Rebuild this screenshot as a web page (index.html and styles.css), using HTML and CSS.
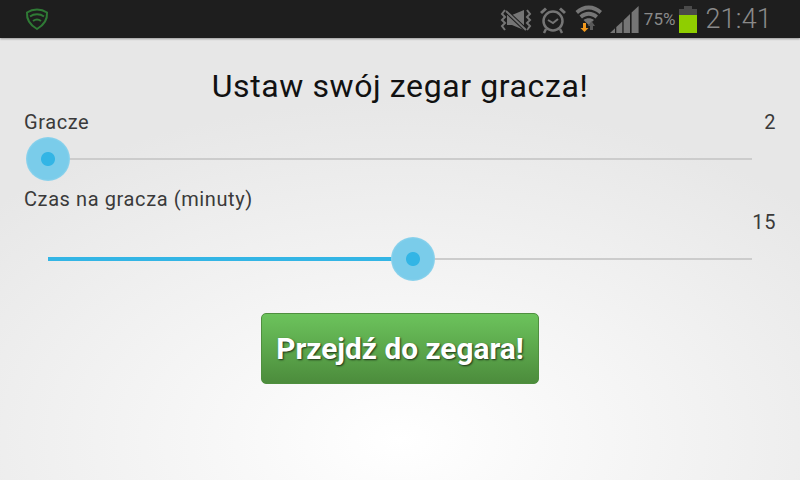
FILE: index.html
```html
<!DOCTYPE html>
<html lang="pl">
<head>
    <meta charset="UTF-8">
    <meta name="viewport" content="width=device-width, initial-scale=1.0">
    <title>Zegar gracza</title>
    <link rel="stylesheet" href="styles.css">
</head>
<body>
    <div class="status-bar">
        <svg class="shield" width="24" height="24" viewBox="0 0 24 24" fill="none" stroke="#2f7a35" stroke-width="2">
            <path d="M2 5.500C8 1.500 16 1.500 22 5.500C22.500 12 19 18 12 22C5 18 1.500 12 2 5.500Z"/>
            <path d="M5 9.500C9 6.500 15 6.500 19 9.500"/>
            <path d="M8 14C10.500 12.200 13.500 12.200 16 14"/>
        </svg>
        <div class="status-icons">
            <svg class="ico-mute" width="32" height="24" viewBox="0 0 32 24" fill="none" stroke="#757575" stroke-width="2">
                <path d="M5 2L2 6l3 3-3 3 3 3-3 3 3 4"/>
                <path d="M27 2l3 4-3 3 3 3-3 3 3 3-3 4"/>
                <path d="M7 7h5l12-5v20L12 17H7Z" fill="#757575" stroke="none"/>
                <path d="M6 3l20 19" stroke="#1e1e1e" stroke-width="4"/>
                <path d="M6 3l20 19"/>
            </svg>
            <svg class="ico-alarm" width="26" height="28" viewBox="0 0 26 28" fill="none" stroke="#757575" stroke-width="2.500">
                <circle cx="13" cy="15" r="9.500"/>
                <path d="M8 14l5 3 5-4" stroke-width="2"/>
                <path d="M1 7L6 2.500M25 7L20 2.500" stroke-width="3"/>
                <path d="M6 23l-2 4M20 23l2 4"/>
            </svg>
            <svg class="ico-wifi" width="28" height="30" viewBox="0 0 28 30">
                <path d="M0.500 7C7.500 -0.500 20 -0.500 27 7L24.500 10C18 4 9.500 4 3 10Z" fill="#757575"/>
                <path d="M4.500 11.500C10 6.500 17.500 6.500 23 11.500L20.500 14.500C16 10.800 11.500 10.800 7 14.500Z" fill="#757575"/>
                <path d="M8.500 16C11.500 13.500 16 13.500 19 16L13.700 21Z" fill="#757575"/>
                <path d="M13 22l3.500-5 3.500 5h-2v4h-3v-4Z" fill="#5a5a5a"/>
                <path d="M8 19h3v5h2.500L9.500 28 5.500 24H8Z" fill="#f39a1d"/>
            </svg>
            <svg class="ico-signal" width="29" height="27" viewBox="0 0 29 27" fill="#757575">
                <path d="M0 27L5 22.300V27Z"/>
                <path d="M6.300 21L12.300 15.400V27H6.300Z"/>
                <path d="M13.600 14.200L20 8.100V27H13.600Z"/>
                <path d="M21.600 6.600L28.600 0V27H21.600Z"/>
            </svg>
            <span class="battery-text">75%</span>
            <div class="battery">
                <div class="battery-cap"></div>
                <div class="battery-body">
                    <div class="battery-level"></div>
                </div>
            </div>
            <span class="clock">21:41</span>
        </div>
    </div>

    <div class="content">
        <h1 class="title">Ustaw swój zegar gracza!</h1>

        <div class="label-row">
            <span>Gracze</span>
            <span>2</span>
        </div>
        <div class="slider">
            <div class="track"></div>
            <div class="fill" style="width: 0%"></div>
            <div class="thumb" style="left: 0%"></div>
        </div>

        <div class="label-row label-row-second">
            <span>Czas na gracza (minuty)</span>
        </div>
        <div class="value-row">15</div>
        <div class="slider">
            <div class="track"></div>
            <div class="fill" style="width: 51.85%"></div>
            <div class="thumb" style="left: 51.85%"></div>
        </div>

        <div class="button-row">
            <button class="go-button">Przejdź do zegara!</button>
        </div>
    </div>
</body>
</html>
```

FILE: styles.css
```css
html, body {
    margin: 0;
    height: 100%;
}

body {
    width: 800px;
    height: 480px;
    overflow: hidden;
    display: flex;
    flex-direction: column;
    font-family: Roboto, "Liberation Sans", sans-serif;
    background: radial-gradient(ellipse 560px 340px at 400px 440px, #ffffff 0%, #f3f3f3 50%, #e7e7e7 100%);
}

.status-bar {
    height: 38px;
    flex: none;
    display: flex;
    align-items: center;
    justify-content: space-between;
    padding: 0 28px 0 25px;
    background: #1e1e1e;
    box-shadow: 0 1px 2px rgba(0, 0, 0, 0.35);
}

.status-icons {
    display: flex;
    align-items: center;
}

.ico-mute { margin-right: 8px; margin-top: 2px; }
.ico-alarm { margin-right: 9px; margin-top: 1px; }
.ico-wifi { margin-right: 7px; }
.ico-signal { margin-right: 5px; }

.battery-text {
    font-size: 17px;
    color: #8a8a8a;
    margin-right: 4px;
}

.battery {
    width: 18px;
    display: flex;
    flex-direction: column;
    align-items: center;
    margin-right: 8px;
}

.battery-cap {
    width: 8px;
    height: 3px;
    background: #4a4a4a;
}

.battery-body {
    width: 18px;
    height: 24px;
    background: #4a4a4a;
    display: flex;
    flex-direction: column;
    justify-content: flex-end;
}

.battery-level {
    height: 18px;
    background: #8fce00;
}

.clock {
    font-size: 27px;
    font-weight: 300;
    letter-spacing: 0.2px;
    color: #8a8a8a;
}

.content {
    flex: 1;
    padding: 0 24px;
}

.title {
    margin: 28px 0 4px;
    font-size: 32px;
    letter-spacing: 0.6px;
    line-height: 40px;
    font-weight: 400;
    text-align: center;
    color: #111;
}

.label-row {
    display: flex;
    justify-content: space-between;
    font-size: 20px;
    letter-spacing: 0.6px;
    line-height: 24px;
    color: #3a3a3a;
}

.label-row-second {
    margin-top: 6px;
}

.value-row {
    font-size: 20px;
    letter-spacing: 0.6px;
    line-height: 23px;
    text-align: right;
    color: #3a3a3a;
}

.slider {
    position: relative;
    height: 44px;
    margin: 3px 24px 0;
}

.track {
    position: absolute;
    left: 0;
    right: 0;
    top: 21px;
    height: 2px;
    background: #cccccc;
}

.fill {
    position: absolute;
    left: 0;
    top: 20px;
    height: 4px;
    background: #33b5e5;
}

.thumb {
    position: absolute;
    top: 0;
    width: 44px;
    height: 44px;
    margin-left: -22px;
    border-radius: 50%;
    background: radial-gradient(circle, #33b5e5 0, #33b5e5 6.500px, #7accea 7.500px, #7accea 20px, #8fd3ec 22px);
}

.button-row {
    display: flex;
    justify-content: center;
    margin-top: 32px;
}

.go-button {
    width: 278px;
    height: 71px;
    border: 1px solid #4f8f3f;
    border-radius: 5px;
    background: linear-gradient(#6cc35c, #4c8c3c);
    color: #fff;
    font-family: Roboto, "Liberation Sans", sans-serif;
    font-size: 29.8px;
    font-weight: 700;
    text-shadow: 1px 1px 2px rgba(0, 0, 0, 0.7);
    padding: 0;
}
```
